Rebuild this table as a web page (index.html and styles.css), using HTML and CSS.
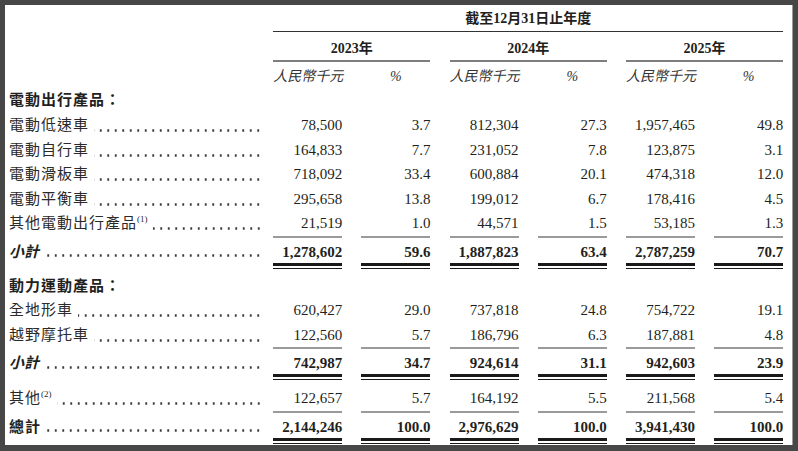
FILE: index.html
```html
<!DOCTYPE html>
<html lang="zh-Hant">
<head>
<meta charset="utf-8">
<title>收入明細</title>
<link rel="stylesheet" href="styles.css">
</head>
<body>
<div class="sheet">
  <div class="row hdr-period">
    <div></div>
    <div class="period">截至12月31日止年度</div>
  </div>
  <div class="row hdr-years">
    <div></div>
    <div class="year">2023年</div>
    <div class="year">2024年</div>
    <div class="year">2025年</div>
  </div>
  <div class="row hdr-units">
    <div></div>
    <div class="unit">人民幣千元</div><div class="pct">%</div>
    <div class="unit">人民幣千元</div><div class="pct">%</div>
    <div class="unit">人民幣千元</div><div class="pct">%</div>
  </div>

  <div class="row section"><div class="label">電動出行產品：</div></div>

  <div class="row item">
    <div class="label"><span class="name">電動低速車</span><span class="dots"></span></div>
    <div class="num">78,500</div><div class="num">3.7</div><div class="num">812,304</div><div class="num">27.3</div><div class="num">1,957,465</div><div class="num">49.8</div>
  </div>
  <div class="row item">
    <div class="label"><span class="name">電動自行車</span><span class="dots"></span></div>
    <div class="num">164,833</div><div class="num">7.7</div><div class="num">231,052</div><div class="num">7.8</div><div class="num">123,875</div><div class="num">3.1</div>
  </div>
  <div class="row item">
    <div class="label"><span class="name">電動滑板車</span><span class="dots"></span></div>
    <div class="num">718,092</div><div class="num">33.4</div><div class="num">600,884</div><div class="num">20.1</div><div class="num">474,318</div><div class="num">12.0</div>
  </div>
  <div class="row item">
    <div class="label"><span class="name">電動平衡車</span><span class="dots"></span></div>
    <div class="num">295,658</div><div class="num">13.8</div><div class="num">199,012</div><div class="num">6.7</div><div class="num">178,416</div><div class="num">4.5</div>
  </div>
  <div class="row item">
    <div class="label"><span class="name">其他電動出行產品<sup class="note">(1)</sup></span><span class="dots"></span></div>
    <div class="num">21,519</div><div class="num">1.0</div><div class="num">44,571</div><div class="num">1.5</div><div class="num">53,185</div><div class="num">1.3</div>
  </div>
  <div class="row subtotal">
    <div class="label"><span class="name sub">小計</span><span class="dots"></span></div>
    <div class="num">1,278,602</div><div class="num">59.6</div><div class="num">1,887,823</div><div class="num">63.4</div><div class="num">2,787,259</div><div class="num">70.7</div>
  </div>

  <div class="row section second"><div class="label">動力運動產品：</div></div>

  <div class="row item">
    <div class="label"><span class="name">全地形車</span><span class="dots"></span></div>
    <div class="num">620,427</div><div class="num">29.0</div><div class="num">737,818</div><div class="num">24.8</div><div class="num">754,722</div><div class="num">19.1</div>
  </div>
  <div class="row item">
    <div class="label"><span class="name">越野摩托車</span><span class="dots"></span></div>
    <div class="num">122,560</div><div class="num">5.7</div><div class="num">186,796</div><div class="num">6.3</div><div class="num">187,881</div><div class="num">4.8</div>
  </div>
  <div class="row subtotal">
    <div class="label"><span class="name sub">小計</span><span class="dots"></span></div>
    <div class="num">742,987</div><div class="num">34.7</div><div class="num">924,614</div><div class="num">31.1</div><div class="num">942,603</div><div class="num">23.9</div>
  </div>

  <div class="row item other">
    <div class="label"><span class="name">其他<sup class="note">(2)</sup></span><span class="dots"></span></div>
    <div class="num">122,657</div><div class="num">5.7</div><div class="num">164,192</div><div class="num">5.5</div><div class="num">211,568</div><div class="num">5.4</div>
  </div>
  <div class="row subtotal total">
    <div class="label"><span class="name tot">總計</span><span class="dots"></span></div>
    <div class="num">2,144,246</div><div class="num">100.0</div><div class="num">2,976,629</div><div class="num">100.0</div><div class="num">3,941,430</div><div class="num">100.0</div>
  </div>
</div>
</body>
</html>
```
FILE: styles.css
```css
* { box-sizing: border-box; }

html, body {
  margin: 0;
  padding: 0;
}

body {
  width: 798px;
  height: 451px;
  overflow: hidden;
  background: #474747;
}

.sheet {
  margin: 5px 0 0 5px;
  width: 788px;
  height: 440px;
  padding-left: 4px;
  background: #fff;
  border-right: 1px solid #9c9c9c;
  font-family: "Liberation Serif", "Noto Sans CJK TC", serif;
  color: #231f20;
  overflow: hidden;
}

.row {
  display: grid;
  grid-template-columns: 245px repeat(6, 69px);
  column-gap: 19.2px;
}

/* header */
.period {
  grid-column: 2 / -1;
  height: 27px;
  line-height: 26px;
  padding-top: 1px;
  text-align: center;
  font-size: 14px;
  font-weight: bold;
  border-bottom: 1px solid #333;
}

.year {
  grid-column: span 2;
  height: 30px;
  padding-top: 6px;
  line-height: 22px;
  text-align: center;
  font-size: 14px;
  font-weight: bold;
  border-bottom: 2px solid #7e7e7e;
}

.hdr-units {
  height: 26px;
}

.unit {
  padding-top: 4px;
  line-height: 22px;
  font-size: 14px;
  font-style: italic;
  color: #333;
  white-space: nowrap;
}

.pct {
  padding-top: 4px;
  line-height: 22px;
  font-size: 14px;
  font-style: italic;
  text-align: center;
  color: #333;
}

/* sections */
.section .label {
  height: 25px;
  line-height: 25px;
  font-size: 15px;
  font-weight: bold;
  letter-spacing: 1px;
}

.section.second .label {
  height: 32.5px;
  padding-top: 8px;
  line-height: 24.5px;
}

/* rows */
.label {
  display: flex;
  align-items: flex-start;
  margin-right: -9px;
  min-width: 0;
  white-space: nowrap;
}

.name {
  flex: none;
  font-size: 15px;
  letter-spacing: 1px;
  color: #2a2a2a;
}

.name.sub {
  font-weight: bold;
  font-style: italic;
  letter-spacing: 0;
  color: #231f20;
}

.name.tot {
  font-weight: bold;
  color: #231f20;
}

.note {
  font-size: 9px;
  line-height: 0;
  letter-spacing: 0;
  vertical-align: 6px;
}

/* dot leaders */
.dots {
  flex: 1;
  min-width: 0;
  height: 24.5px;
  margin-left: 5px;
  background-image: radial-gradient(circle at 50% 50%, #3a3a3a 0 0.85px, rgba(58, 58, 58, 0) 1.25px);
  background-size: 7.5px 2.5px;
  background-repeat: repeat-x;
  background-position: right 1px bottom 6px;
}

.subtotal .dots {
  height: 22px;
}

.item {
  height: 24.5px;
  line-height: 24.5px;
}

.item.other {
  height: 33.5px;
  padding-top: 9px;
}

.num {
  text-align: right;
  font-size: 15px;
  white-space: nowrap;
}

.subtotal .label {
  padding-top: 5px;
  line-height: 22px;
}

.subtotal .num {
  padding-top: 3px;
  line-height: 22px;
  font-weight: bold;
  border-top: 2px solid #9a9a9a;
  border-bottom: 3px solid #1a1a1a;
  box-shadow: 0 2px 0 #fff, 0 3px 0 #1a1a1a;
}
```
